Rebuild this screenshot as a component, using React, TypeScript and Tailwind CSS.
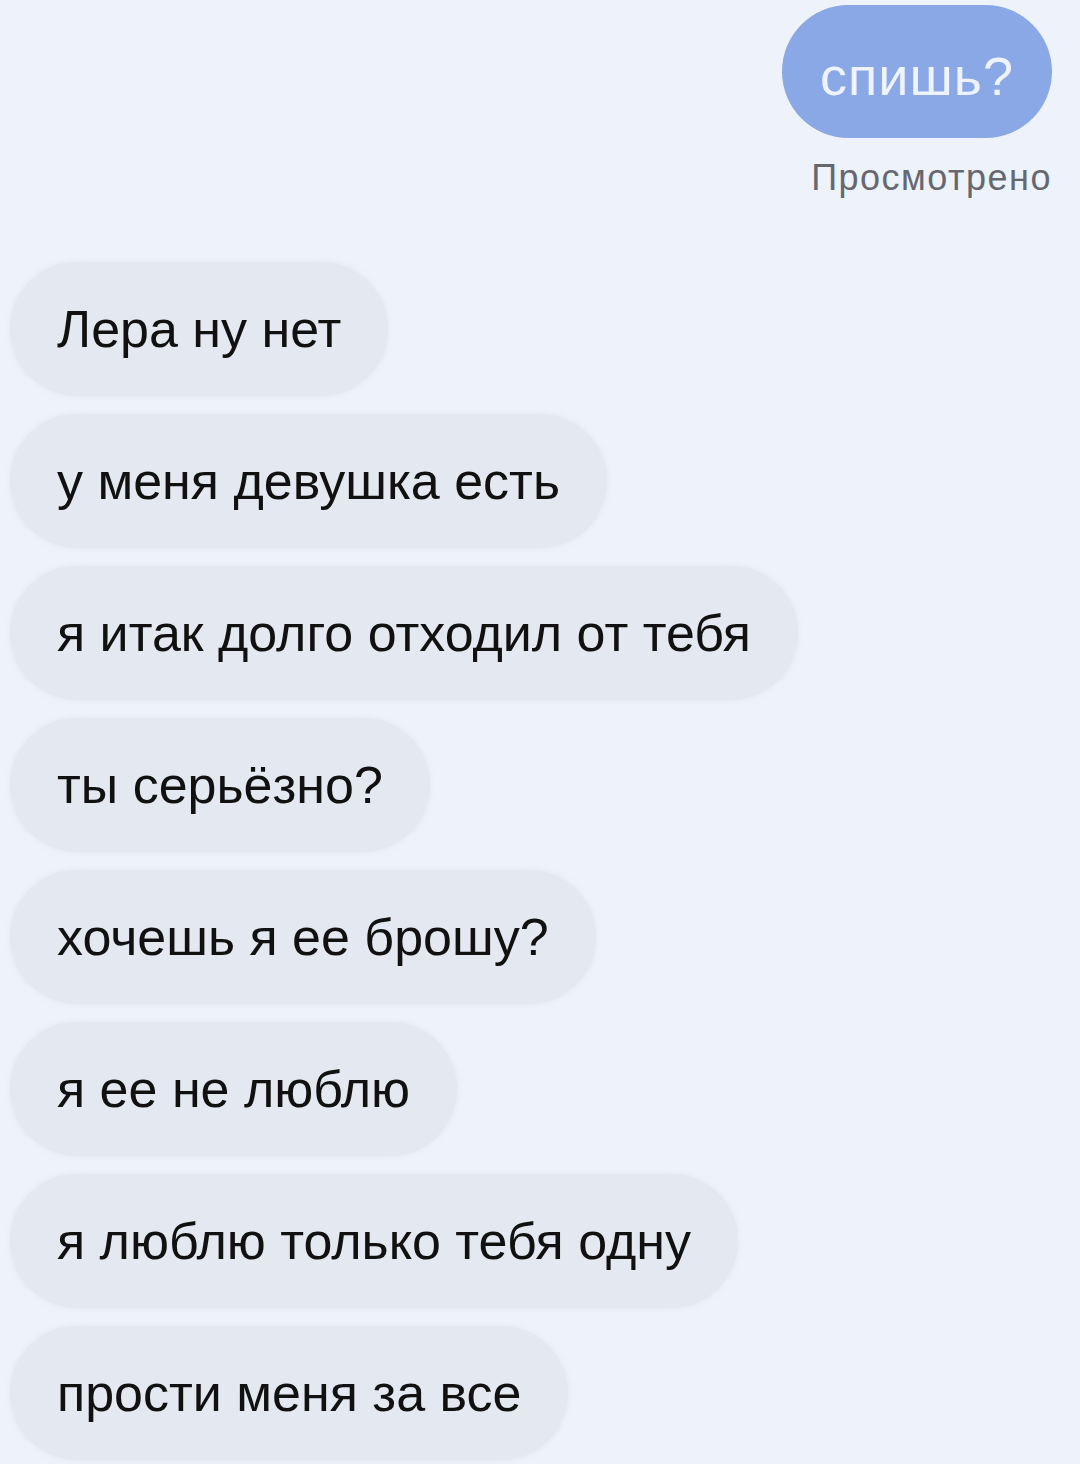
import React from 'react';

const incoming = [
  'Лера ну нет',
  'у меня девушка есть',
  'я итак долго отходил от тебя',
  'ты серьёзно?',
  'хочешь я ее брошу?',
  'я ее не люблю',
  'я люблю только тебя одну',
  'прости меня за все',
];

const Bubble: React.FC<{ text: string }> = ({ text }) => (
  <div className="flex h-[134px] items-center rounded-[67px] bg-[#e4e8f1] pl-[47px] pr-[47px] shadow-[0_0_6px_rgba(200,206,220,0.35)]">
    <span className="whitespace-nowrap text-[52px] leading-none text-[#111111]">{text}</span>
  </div>
);

const App: React.FC = () => {
  return (
    <div
      className="min-h-[1464px] w-[1080px] overflow-hidden bg-[#eef3fb]"
      style={{ fontFamily: '"Liberation Sans", Arial, sans-serif' }}
    >
      {/* own message */}
      <div className="flex flex-col items-end pr-[28px] pt-[5px]">
        <div className="flex h-[133px] w-[270px] items-center justify-center rounded-[67px] bg-[#8aa8e6] pt-[8px]">
          <span className="text-[54px] leading-none tracking-[1px] text-[#eef3ff]">спишь?</span>
        </div>
        <span className="mt-[22px] text-[36px] leading-none tracking-[1.5px] text-[#65686f]">Просмотрено</span>
      </div>

      {/* replies */}
      <div className="mt-[66px] flex flex-col items-start gap-[18px] pl-[10px]">
        {incoming.map((t) => (
          <Bubble key={t} text={t} />
        ))}
      </div>
    </div>
  );
};

export default App;
